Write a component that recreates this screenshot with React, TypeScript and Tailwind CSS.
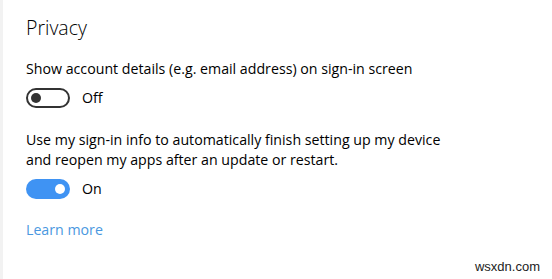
function Toggle({ on }: { on: boolean }) {
  return on ? (
    <div className="flex h-5 w-11 items-center justify-end rounded-full bg-[#3f93f3] pr-[5px]">
      <div className="h-[10px] w-[10px] rounded-full bg-white" />
    </div>
  ) : (
    <div className="flex h-5 w-11 items-center rounded-full border-2 border-[#333] pl-[3px]">
      <div className="h-[10px] w-[10px] rounded-full bg-[#333]" />
    </div>
  );
}

export default function App() {
  return (
    <div
      className="relative flex h-[279px] w-[552px] bg-white text-[#000]"
      style={{ fontFamily: '"Open Sans", "Noto Sans", sans-serif' }}
    >
      <div className="w-[3px] bg-[#f2f2f2]" />
      <div className="flex flex-col pl-[23px] pt-[14px]">
        <h1 className="text-[19.5px] leading-[28px] font-light">Privacy</h1>

        <p className="mt-[17px] text-[14.2px] leading-[20px]">
          Show account details (e.g. email address) on sign-in screen
        </p>
        <div className="mt-[9px] flex items-center gap-3">
          <Toggle on={false} />
          <span className="text-[14.2px] leading-[20px]">Off</span>
        </div>

        <p className="mt-[22px] text-[14.2px] leading-[20px]">
          Use my sign-in info to automatically finish setting up my device
          <br />
          and reopen my apps after an update or restart.
        </p>
        <div className="mt-[9px] flex items-center gap-3">
          <Toggle on={true} />
          <span className="text-[14.2px] leading-[20px]">On</span>
        </div>

        <a className="mt-[21px] text-[14.2px] leading-[20px] text-[#4a98e0]">Learn more</a>
      </div>

      <span
        className="absolute bottom-[4px] right-[12px] text-[13px] leading-[16px] text-[#222]"
        style={{ fontFamily: '"Liberation Sans", Arial, sans-serif' }}
      >
        wsxdn.com
      </span>
    </div>
  );
}
